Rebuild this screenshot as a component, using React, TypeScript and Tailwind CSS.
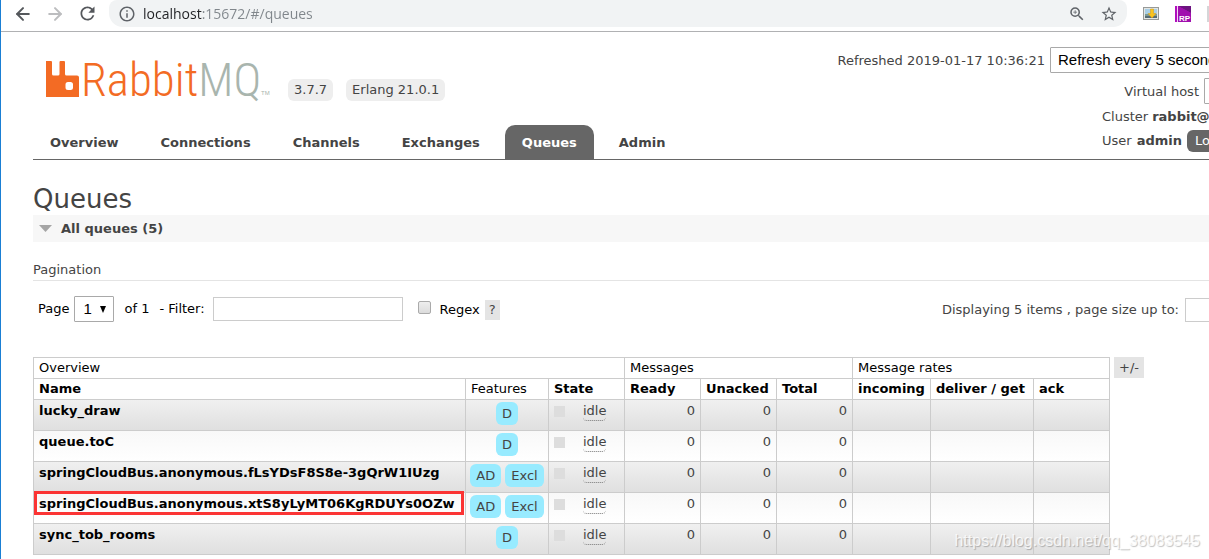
import { useState } from "react";
import { ArrowLeft, ArrowRight } from "lucide-react";
import { MdInfoOutline, MdRefresh, MdStarBorder, MdZoomIn } from "react-icons/md";

type Queue = { name: string; features: string[]; marked?: boolean };

const queues: Queue[] = [
  { name: "lucky_draw", features: ["D"] },
  { name: "queue.toC", features: ["D"] },
  { name: "springCloudBus.anonymous.fLsYDsF8S8e-3gQrW1IUzg", features: ["AD", "Excl"] },
  { name: "springCloudBus.anonymous.xtS8yLyMT06KgRDUYs0OZw", features: ["AD", "Excl"], marked: true },
  { name: "sync_tob_rooms", features: ["D"] },
];

const tabs = ["Overview", "Connections", "Channels", "Exchanges", "Queues", "Admin"];

function BrowserBar() {
  return (
    <div className="flex h-8 items-start border-b border-[#b0b1b3] bg-white pl-3 text-[#5f6368]">
      <div className="flex h-[27px] items-center gap-3">
        <button aria-label="Back" className="text-[#55585c]"><ArrowLeft size={20} strokeWidth={2.4} /></button>
        <button aria-label="Forward" className="text-[#bcbdbf]"><ArrowRight size={20} strokeWidth={2.4} /></button>
        <button aria-label="Reload" className="text-[#55585c]"><MdRefresh size={21} /></button>
      </div>
      <div className="ml-[11px] flex h-[27px] grow items-center rounded-b-[14px] rounded-t-lg bg-[#f1f3f4] pl-[9px] pr-[9px]">
        <MdInfoOutline size={18} />
        <input
          aria-label="Address"
          className="ml-[7px] grow bg-[linear-gradient(to_right,#202124_59px,#80868b_59px)] bg-clip-text font-['Open_Sans',sans-serif] text-sm text-transparent outline-none"
          defaultValue="localhost:15672/#/queues"
        />
        <button aria-label="Zoom"><MdZoomIn size={18} /></button>
        <button aria-label="Bookmark" className="ml-[14px]"><MdStarBorder size={18} /></button>
      </div>
      <div className="ml-4 flex h-[27px] shrink-0 items-center gap-4">
        <svg width="16" height="14" viewBox="0 0 16 14" aria-hidden="true">
          <rect x=".5" y=".5" width="15" height="12" fill="#e3e6e4" stroke="#979a98" />
          <rect x="2" y="2" width="12" height="5" fill="#a9cfe6" />
          <path d="M2 7h12v4H2z" fill="#7d9a94" />
          <path d="M2 9h12v2H2z" fill="#566c74" />
          <path d="M7.500 2h3v4.500h2.500L9 11 5 6.500h2.500z" fill="#fbc41d" stroke="#d79d12" strokeWidth=".5" />
        </svg>
        <svg width="16" height="16" viewBox="0 0 16 16" aria-hidden="true">
          <rect width="16" height="16" fill="#b010bd" />
          <path d="M3 0h13v7z" fill="#6d1380" />
          <path d="M3 0l13 7v9H3z" fill="#a00fae" />
          <rect x="2" width="1" height="16" fill="#f3d5f5" />
          <text x="4" y="14.500" fontSize="8" fontWeight="700" fill="#fff" fontFamily="Liberation Sans, sans-serif">RP</text>
        </svg>
        <span className="h-4 w-[2px] bg-[#d5d6d8]" />
      </div>
    </div>
  );
}

function Logo() {
  return (
    <svg className="mb-[3px] overflow-visible" width="228" height="46" viewBox="0 0 228 46" role="img" aria-label="RabbitMQ">
      <path
        fill="#f36b24"
        fillRule="evenodd"
        d="M1 9h5q1 0 1 1v12q0 1.500 1.500 1.500H13q1.500 0 1.500-1.500V10q0-1 1-1h3.500q1 0 1 1v12q0 1.500 1.500 1.500H32q2 0 2 2V45H1zM23 30q-2.500 0-2.500 2.500v3Q20.500 38 23 38h2.500q2.500 0 2.500-2.500v-3Q28 30 25.500 30z"
      />
      <text x="36" y="44" fontSize="47" fontFamily="Roboto Condensed, sans-serif" fontWeight="300" fill="#f36b24">
        Rabbit<tspan fill="#a9b5ae">MQ</tspan>
      </text>
      <text x="216" y="43" fontSize="6" fontFamily="Liberation Sans, sans-serif" fill="#a9b5ae">TM</text>
    </svg>
  );
}

function Header() {
  return (
    <header className="flex justify-between border-b border-[#666]">
      <div>
        <div className="flex items-end gap-[13px] pb-6 pl-3 pt-5">
          <Logo />
          <span className="ml-[2px] rounded-md bg-[#eee] px-[6px] leading-[22px]">3.7.7</span>
          <span className="rounded-md bg-[#eee] px-[6px] leading-[22px]">Erlang 21.0.1</span>
        </div>
        <nav className="flex gap-2">
          {tabs.map((tab) => (
            <a
              key={tab}
              href={"#/" + tab.toLowerCase()}
              className={
                tab === "Queues"
                  ? "rounded-t-[10px] bg-[#666] px-[17px] pt-[2px] font-bold leading-8 text-white"
                  : "px-[17px] pt-[2px] font-bold leading-8 text-[#444]"
              }
            >
              {tab}
            </a>
          ))}
        </nav>
      </div>
      <div className="-mr-[43px] flex shrink-0 flex-col items-end pt-[15px]">
        <div className="flex h-[28px] items-start gap-[5px]">
          <label htmlFor="refresh" className="leading-[27px]">Refreshed 2019-01-17 10:36:21</label>
          <select id="refresh" className="h-[26px] w-[202px] appearance-none rounded-[1px] border border-[#a9a9a9] bg-white px-[7px] font-['Liberation_Sans',sans-serif] text-[15px] leading-5 text-black">
            <option>Refresh every 5 seconds</option>
          </select>
        </div>
        <div className="mt-[3px] flex items-start gap-[5px]">
          <label htmlFor="vhost" className="leading-[27px]">Virtual host</label>
          <select id="vhost" className="h-[26px] w-12 appearance-none rounded-[1px] border border-[#a9a9a9] bg-white px-2 font-['Liberation_Sans',sans-serif] text-[15px] leading-5 text-black">
            <option>All</option>
          </select>
        </div>
        <div className="flex w-[150px] gap-1 leading-6">
          Cluster <b>rabbit@</b>
        </div>
        <div className="flex w-[150px] items-center gap-[5px] leading-6">
          User <b>admin</b>
          <button className="rounded-md bg-[#666] px-2 leading-[22px] text-white">Log out</button>
        </div>
      </div>
    </header>
  );
}

function Pagination() {
  const [regex, setRegex] = useState(false);
  return (
    <section className="mt-[19px]">
      <h3 className="border-b border-[#e4e4e4] pb-px leading-[18px]">Pagination</h3>
      <div className="mt-[15px] flex items-center pl-[5px] text-black">
        <label htmlFor="page">Page</label>
        <div className="relative ml-[5px]">
          <select id="page" className="h-[26px] w-10 appearance-none rounded-[1px] border border-[#a9a9a9] bg-white px-2 font-['Liberation_Sans',sans-serif] text-[15px] leading-5">
            <option>1</option>
          </select>
          <svg className="pointer-events-none absolute right-2 top-[10px]" width="6" height="7" viewBox="0 0 6 7" aria-hidden="true">
            <path d="M0 0h6L3 7z" />
          </svg>
        </div>
        <span className="ml-[10px]">of 1</span>
        <label htmlFor="filter" className="ml-[10px]">- Filter:</label>
        <input id="filter" type="text" className="ml-2 h-6 w-[190px] border border-[#ccc] px-1 outline-none" />
        <input
          id="regex"
          type="checkbox"
          checked={regex}
          onChange={(e) => setRegex(e.target.checked)}
          className="ml-[15px] mb-1 size-[13px] appearance-none rounded-[2px] border border-[#aaa] bg-linear-to-b from-[#eee] to-[#dcdcdc] checked:bg-[#666]"
        />
        <label htmlFor="regex" className="ml-[9px] pt-[2px]">Regex</label>
        <button className="ml-[5px] mt-[2px] bg-[#e4e4e4] px-1 leading-5 text-[#444]">?</button>
        <div className="-mr-[43px] ml-auto flex items-center gap-[6px] pt-px text-[#444]">
          <label htmlFor="size">Displaying 5 items , page size up to:</label>
          <input id="size" type="text" className="h-6 w-[67px] border border-[#ccc] outline-none" />
        </div>
      </div>
    </section>
  );
}

function QueueTable() {
  const th = "h-[21px] border border-[#ccc] px-[5px] text-left leading-5 whitespace-nowrap";
  const td = "border border-[#ccc] px-[5px] pt-px align-top leading-5 whitespace-nowrap";
  return (
    <div className="mt-[35px] flex items-start gap-1">
      <table className="border-collapse text-black">
        <thead>
          <tr>
            <th colSpan={3} className={th + " font-normal"}>Overview</th>
            <th colSpan={3} className={th + " font-normal"}>Messages</th>
            <th colSpan={3} className={th + " font-normal"}>Message rates</th>
          </tr>
          <tr>
            <th className={th + " min-w-[432px]"}>Name</th>
            <th className={th + " min-w-[83px] font-normal"}>Features</th>
            <th className={th + " min-w-[76px]"}>State</th>
            <th className={th + " min-w-[76px]"}>Ready</th>
            <th className={th + " min-w-[76px]"}>Unacked</th>
            <th className={th + " min-w-[76px]"}>Total</th>
            <th className={th + " min-w-[78px]"}>incoming</th>
            <th className={th + " min-w-[103px]"}>deliver / get</th>
            <th className={th + " min-w-[76px]"}>ack</th>
          </tr>
        </thead>
        <tbody>
          {queues.map((q, i) => (
            <tr
              key={q.name}
              className={i % 2 === 0 ? "h-[31px] bg-linear-to-b from-[#f0f0f0] to-[#dfdfdf]" : "h-[31px] bg-linear-to-b from-[#f8f8f8] to-white"}
            >
              <td className={td + " relative"}>
                <a href={"#/queues/" + q.name} className="font-bold">{q.name}</a>
                {q.marked && <span className="pointer-events-none absolute -top-[2px] left-0 h-6 w-[430px] border-3 border-[#fb3434]" />}
              </td>
              <td className="border border-[#ccc] px-1 pt-px align-top whitespace-nowrap text-[#444]">
                <div className="flex justify-center gap-1 pt-px">
                  {q.features.map((f) => (
                    <span key={f} className="rounded-md bg-[#98ebff] px-[6px] leading-[23px]">{f}</span>
                  ))}
                </div>
              </td>
              <td className={td + " text-[#444]"}>
                <div className="flex items-start">
                  <span className="mt-[5px] size-[11px] bg-[#ddd]" />
                  <span className="ml-[18px] rounded-[4px] border-b border-dotted border-[#777] leading-[19px]">idle</span>
                </div>
              </td>
              <td className={td + " text-right text-[#444]"}>0</td>
              <td className={td + " text-right text-[#444]"}>0</td>
              <td className={td + " text-right text-[#444]"}>0</td>
              <td className={td} />
              <td className={td} />
              <td className={td} />
            </tr>
          ))}
        </tbody>
      </table>
      <button className="bg-[#e4e4e4] px-[5px] leading-[21px] text-[#444]">+/-</button>
    </div>
  );
}

export default function App() {
  return (
    <div className="relative min-h-screen overflow-hidden border-l border-[#1a7fd4] bg-white font-['DejaVu_Sans',Verdana,sans-serif] text-[13px] leading-5 text-[#444]">
      <BrowserBar />
      <div className="pb-1 pl-8">
        <Header />
        <main>
          <h1 className="mt-6 text-[26px] leading-[31px]">Queues</h1>
          <h2 className="flex items-center gap-[9px] bg-[#f7f7f7] pl-[6px] font-bold leading-[27px]">
            <svg width="13" height="7" viewBox="0 0 13 7" aria-hidden="true">
              <path d="M0 0h13L6.500 7z" fill="#a5a5a5" />
            </svg>
            All queues (5)
          </h2>
          <Pagination />
          <QueueTable />
        </main>
      </div>
      <span className="pointer-events-none absolute bottom-2 right-[9px] font-['Liberation_Sans',sans-serif] text-base leading-5 text-white/80 [text-shadow:1px_1px_1px_rgb(0_0_0/0.25)]">
        https://blog.csdn.net/qq_38083545
      </span>
    </div>
  );
}
